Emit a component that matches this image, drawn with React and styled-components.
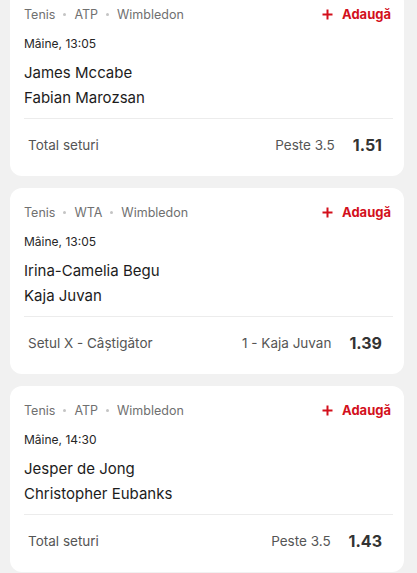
import React from 'react';
import styled, { createGlobalStyle } from 'styled-components';

const GlobalStyle = createGlobalStyle`
    html, body {
        margin: 0;
        padding: 0;
        background: #f1f1f1;
    }
    body {
        font-family: Inter, "Noto Sans", "Liberation Sans", sans-serif;
        -webkit-font-smoothing: antialiased;
    }
`;

const List = styled.div`
    display: flex;
    flex-direction: column;
    gap: 12px;
    padding: 0 13px 0 10px;
    margin-top: -10px;
`;

const Card = styled.div`
    background: #fff;
    border-radius: 12px;
    padding: 14px 11px 5px 14px;
    display: flex;
    flex-direction: column;
`;

const TopRow = styled.div`
    display: flex;
    align-items: center;
    justify-content: space-between;
    height: 20px;
`;

const Crumbs = styled.div`
    display: flex;
    align-items: center;
    gap: 8px;
    font-size: 12.5px;
    color: #707070;
`;

const Dot = styled.span`
    width: 3px;
    height: 3px;
    border-radius: 50%;
    background: #c4c4c4;
`;

const AddButton = styled.button`
    display: flex;
    align-items: center;
    gap: 9px;
    border: none;
    background: none;
    padding: 0 2px 0 0;
    font-family: inherit;
    font-size: 13px;
    font-weight: 700;
    color: #d3101c;
    cursor: pointer;
`;

const When = styled.div`
    margin-top: 10px;
    font-size: 12px;
    font-weight: 400;
    line-height: 20px;
    color: #262626;
`;

const Players = styled.div`
    margin-top: 6px;
    display: flex;
    flex-direction: column;
`;

const Player = styled.div`
    font-size: 15px;
    line-height: 25px;
    color: #1c1c1c;
`;

const Divider = styled.div`
    height: 1px;
    background: #ececec;
    margin-top: 8px;
`;

const Market = styled.div`
    display: flex;
    align-items: center;
    height: 52px;
    padding: 0 11px 0 4px;
    font-size: 13.5px;
    color: #555;
`;

const MarketName = styled.span`
    flex: 1;
`;

const Pick = styled.span`
    margin-right: 18px;
`;

const Odds = styled.span`
    font-size: 16px;
    font-weight: 700;
    color: #333;
`;

const PlusIcon = () => (
    <svg width="11" height="11" viewBox="0 0 11 11">
        <path d="M5.5 0.5v10M0.5 5.5h10" stroke="currentColor" strokeWidth="2" />
    </svg>
);

const events = [
    { league: 'ATP', time: 'Mâine, 13:05', players: ['James Mccabe', 'Fabian Marozsan'], market: 'Total seturi', pick: 'Peste 3.5', odds: '1.51' },
    { league: 'WTA', time: 'Mâine, 13:05', players: ['Irina-Camelia Begu', 'Kaja Juvan'], market: 'Setul X - Câștigător', pick: '1 - Kaja Juvan', odds: '1.39' },
    { league: 'ATP', time: 'Mâine, 14:30', players: ['Jesper de Jong', 'Christopher Eubanks'], market: 'Total seturi', pick: 'Peste 3.5', odds: '1.43' },
];

function EventCard({ ev }) {
    return (
        <Card>
            <TopRow>
                <Crumbs>
                    <span>Tenis</span>
                    <Dot />
                    <span>{ev.league}</span>
                    <Dot />
                    <span>Wimbledon</span>
                </Crumbs>
                <AddButton>
                    <PlusIcon />
                    Adaugă
                </AddButton>
            </TopRow>
            <When>{ev.time}</When>
            <Players>
                {ev.players.map((p) => (
                    <Player key={p}>{p}</Player>
                ))}
            </Players>
            <Divider />
            <Market>
                <MarketName>{ev.market}</MarketName>
                <Pick>{ev.pick}</Pick>
                <Odds>{ev.odds}</Odds>
            </Market>
        </Card>
    );
}

export default function App() {
    return (
        <>
            <GlobalStyle />
            <List>
                {events.map((ev, i) => (
                    <EventCard key={i} ev={ev} />
                ))}
            </List>
        </>
    );
}
